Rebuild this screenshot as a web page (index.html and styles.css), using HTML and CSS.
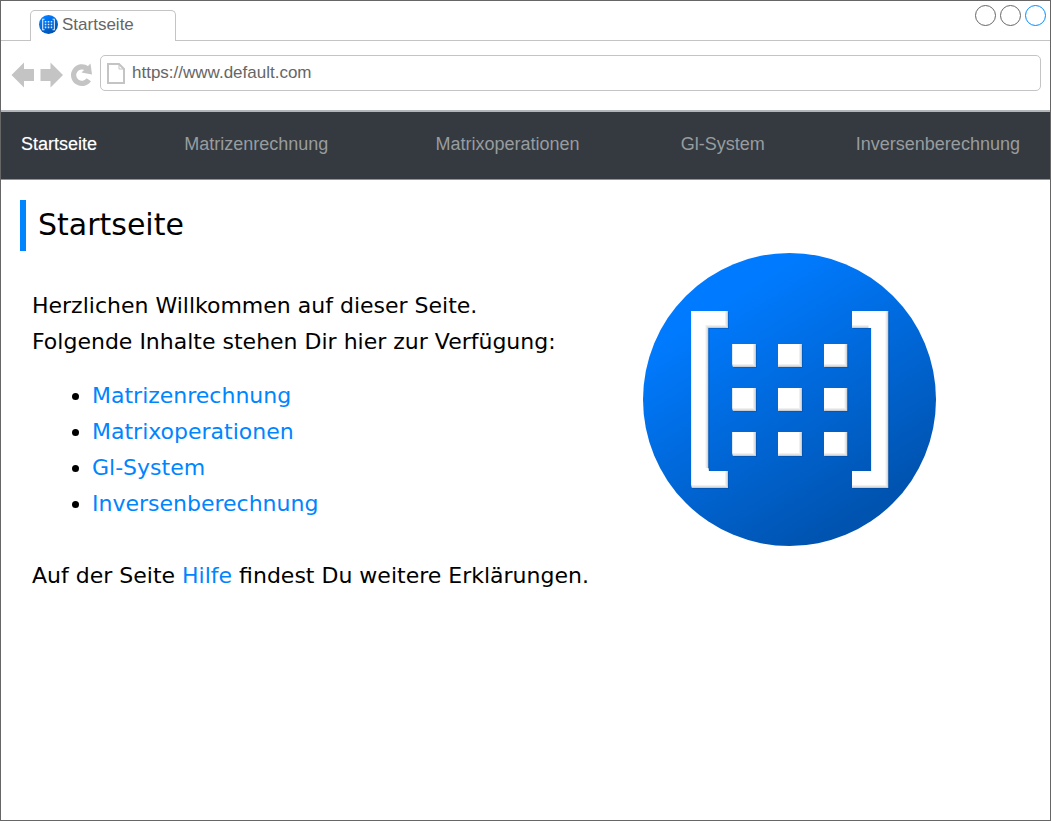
FILE: index.html
```html
<!DOCTYPE html>
<html lang="de">
<head>
<meta charset="utf-8">
<title>Startseite</title>
<link rel="stylesheet" href="styles.css">
</head>
<body>
<div class="window">
  <header class="tab-strip">
    <div class="tab">
      <svg class="tab-icon" viewBox="0 0 293 293" aria-hidden="true">
        <circle cx="146.5" cy="146.5" r="146.5" fill="url(#disc)"/>
        <use href="#matrix" fill="#fff" opacity=".85"/>
      </svg>
      <span>Startseite</span>
    </div>
    <div class="window-controls">
      <button class="control" type="button" aria-label="Minimieren"></button>
      <button class="control" type="button" aria-label="Maximieren"></button>
      <button class="control control-close" type="button" aria-label="Schließen"></button>
    </div>
  </header>

  <div class="toolbar">
    <button class="tool" type="button" aria-label="Zurück">
      <svg viewBox="0 0 24 26"><path d="M.5 13 13 .5V7H23V19H13V25.500Z"/></svg>
    </button>
    <button class="tool" type="button" aria-label="Vorwärts">
      <svg viewBox="0 0 24 26"><path d="M23 13 10.500 .5V7H.5V19H10.500V25.500Z"/></svg>
    </button>
    <button class="tool" type="button" aria-label="Neu laden">
      <svg viewBox="0 0 24 26"><path d="M18.800 17.800A8.300 8.300 0 1 1 17 6.600" fill="none" stroke="#c4c4c4" stroke-width="5.200"/><path d="M20.500 1.500 22 12.500 11.500 10.500Z"/></svg>
    </button>
    <div class="address">
      <svg class="page-icon" viewBox="0 0 18 21" aria-hidden="true"><path d="M1 1H12L17 6V20H1Z"/><path class="fold" d="M12 1V6H17"/></svg>
      <input class="url" type="text" value="https://www.default.com" aria-label="Adresse">
    </div>
  </div>

  <nav class="nav">
    <a class="nav-link active" href="#start">Startseite</a>
    <a class="nav-link" href="#matrizen">Matrizenrechnung</a>
    <a class="nav-link" href="#operationen">Matrixoperationen</a>
    <a class="nav-link" href="#system">Gl-System</a>
    <a class="nav-link" href="#inverse">Inversenberechnung</a>
  </nav>

  <main class="page">
    <h1 class="title">Startseite</h1>
    <div class="content">
      <div class="text">
        <p>Herzlichen Willkommen auf dieser Seite.<br>Folgende Inhalte stehen Dir hier zur Verfügung:</p>
        <ul class="topics">
          <li><a href="#matrizen">Matrizenrechnung</a></li>
          <li><a href="#operationen">Matrixoperationen</a></li>
          <li><a href="#system">Gl-System</a></li>
          <li><a href="#inverse">Inversenberechnung</a></li>
        </ul>
        <p>Auf der Seite <a href="#hilfe">Hilfe</a> findest Du weitere Erklärungen.</p>
      </div>
      <svg class="logo" viewBox="0 0 293 293" role="img" aria-label="Matrix">
        <defs>
          <linearGradient id="disc" x1=".28" y1=".16" x2=".74" y2=".9">
            <stop offset="0" stop-color="#007bff"/>
            <stop offset="1" stop-color="#0053af"/>
          </linearGradient>
          <path id="matrix" d="M48.500 58H85V75H65.500V218H85V235H48.500ZM209 58H245.500V235H209V218H228.500V75H209ZM89.500 91H113V114H89.500ZM135 91H159V114H135ZM181 91H204.500V114H181ZM89.500 135H113V158H89.500ZM135 135H159V158H135ZM181 135H204.500V158H181ZM89.500 179H113V203H89.500ZM135 179H159V203H135ZM181 179H204.500V203H181Z"/>
          <clipPath id="matrix-clip"><use href="#matrix"/></clipPath>
        </defs>
        <circle cx="146.500" cy="146.500" r="146.500" fill="url(#disc)"/>
        <use href="#matrix" x="1" y="1" fill="#003a80" opacity=".3"/>
        <g clip-path="url(#matrix-clip)">
          <use href="#matrix" fill="#c8cdd3"/>
          <use href="#matrix" x="-1" y="-1" fill="#e2e2e2"/>
          <use href="#matrix" x="-2" y="-2" fill="#f0f0f0"/>
          <use href="#matrix" x="-3" y="-3" fill="#fff"/>
          <path fill="#fff" d="M48.500 58H82V72H62V232H48.500ZM48.500 218H82V232H48.500ZM209 58H242V232H209V218H228.500V72H209Z"/>
        </g>
      </svg>
    </div>
  </main>
</div>
</body>
</html>
```
FILE: styles.css
```css
* { box-sizing: border-box; }

body {
  margin: 0;
  background: #fff;
  font-family: "Liberation Sans", Arial, sans-serif;
}

button { padding: 0; border: 0; background: none; }
a { color: #0085ff; text-decoration: none; }

.window {
  min-height: 100vh;
  border: 1px solid #666;
}

.tab-strip {
  display: flex;
  justify-content: space-between;
  align-items: flex-end;
  height: 40px;
  padding: 0 4px 0 29px;
  border-bottom: 1px solid #c4c4c4;
}

.tab {
  display: flex;
  align-items: center;
  gap: 4px;
  width: 146px;
  height: 31px;
  margin-bottom: -1px;
  padding: 0 8px 3px;
  border: 1px solid #c4c4c4;
  border-bottom: 0;
  border-radius: 5px 5px 0 0;
  background: #fff;
  color: #666;
  font-size: 17px;
  line-height: 20px;
}

.tab-icon { width: 19px; height: 19px; }

.window-controls {
  display: flex;
  gap: 4px;
  align-self: flex-start;
  padding-top: 4px;
}

.control {
  width: 21px;
  height: 21px;
  border: 1px solid #666;
  border-radius: 50%;
}

.control-close { border-color: #008cff; }

.toolbar {
  display: flex;
  align-items: center;
  gap: 6px;
  height: 71px;
  padding: 0 9px 5px;
  border-bottom: 2px solid #b3b6b9;
}

.tool { width: 24px; height: 26px; margin-top: 3px; }
.tool svg { display: block; width: 24px; height: 26px; overflow: visible; fill: #c4c4c4; }
.tool:first-child { margin-left: 1px; margin-right: -1px; }

.address {
  display: flex;
  flex: 1;
  align-items: center;
  gap: 7px;
  height: 36px;
  padding: 0 6px;
  border: 1px solid #c4c4c4;
  border-radius: 5px;
}

.page-icon { width: 18px; height: 21px; overflow: visible; fill: none; stroke: #c4c4c4; stroke-width: 2; }
.fold { stroke-width: 1; }

.url {
  flex: 1;
  min-width: 0;
  padding: 0;
  border: 0;
  outline: 0;
  background: none;
  color: #666;
  font: 17px/20px "Liberation Sans", Arial, sans-serif;
}

.nav {
  display: grid;
  grid-template-columns: 116fr 278fr 224fr 206fr 224fr;
  align-items: center;
  height: 68px;
  padding-bottom: 4px;
  border-bottom: 1px solid #8f9498;
  background: #343a40;
}

.nav-link {
  color: #999c9f;
  font-size: 18px;
  line-height: 20px;
  text-align: center;
}

.active { color: #fff; text-shadow: 0 0 1px rgba(255, 255, 255, .4); }

.page {
  padding: 20px 19px;
  color: #000;
  font-family: Verdana, "DejaVu Sans", sans-serif;
}

.title {
  margin: 0;
  padding: 1px 12px 2px;
  border-left: 6px solid #0085ff;
  font-size: 30px;
  font-weight: 400;
  line-height: 48px;
}

.content {
  display: flex;
  align-items: flex-start;
  gap: 50px;
  padding: 2px 12px;
}

.text {
  flex: 0 0 561px;
  padding-top: 35px;
  font-size: 22px;
  line-height: 36px;
  white-space: nowrap;
}

.text p { margin: 0; }
.topics { margin: 18px 0 36px; padding-left: 60px; }
.logo { flex: none; width: 293px; height: 293px; }
```
